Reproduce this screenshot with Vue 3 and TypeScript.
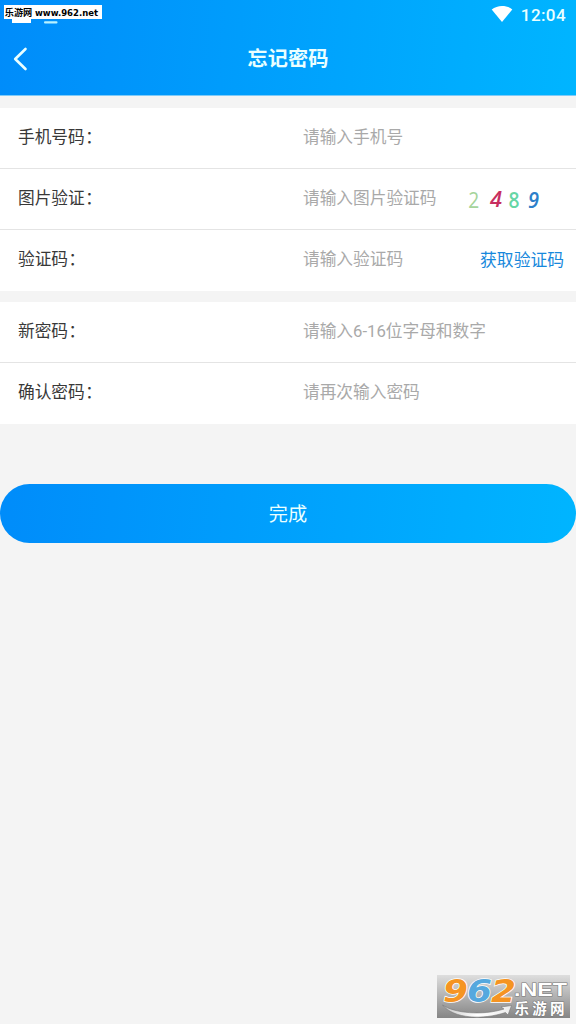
<script setup lang="ts">
import { reactive } from 'vue'

interface Field {
  key: string
  label: string
  hint: string
  extra?: 'captcha' | 'code'
}

const groups: Field[][] = [
  [
    { key: 'phone', label: '手机号码', hint: '请输入手机号' },
    { key: 'captcha', label: '图片验证', hint: '请输入图片验证码', extra: 'captcha' },
    { key: 'code', label: '验证码', hint: '请输入验证码', extra: 'code' },
  ],
  [
    { key: 'password', label: '新密码', hint: '请输入6-16位字母和数字' },
    { key: 'confirm', label: '确认密码', hint: '请再次输入密码' },
  ],
]

const form = reactive<Record<string, string>>({
  phone: '',
  captcha: '',
  code: '',
  password: '',
  confirm: '',
})
</script>

<template>
  <main class="screen" lang="zh-CN">
    <header class="header">
      <div class="status">
        <svg class="wifi" viewBox="0 0 22 18" width="22" height="18">
          <path d="M.7 4.4C6.5-.3 15.500-.3 21.300 4.400L11 17z" fill="#fff" />
        </svg>
        <span class="time">12:04</span>
      </div>
      <div class="nav">
        <svg class="back" viewBox="0 0 16 26" width="16" height="26">
          <path d="M13.500 3L3.200 13L13.500 23" fill="none" stroke="#eaffff" stroke-width="2.600" stroke-linecap="round" stroke-linejoin="round" />
        </svg>
        <h1 class="title">忘记密码</h1>
      </div>
      <svg class="site" viewBox="0 0 104 26" width="104" height="26">
        <rect x="12" y="18" width="19" height="5" fill="#fff" />
        <rect x="44" y="21.200" width="13.500" height="2.400" rx="1" fill="#b9f2ff" />
        <rect x="4" y="5" width="98" height="14" fill="#fff" />
        <text class="site-cn" x="4.800" y="16.300" textLength="27.500">乐游网</text>
        <text class="site-url" x="35" y="16" textLength="63" lengthAdjust="spacingAndGlyphs">www.962.net</text>
      </svg>
    </header>

    <section v-for="(group, i) in groups" :key="i" class="group">
      <div v-for="field in group" :key="field.key" class="row">
        <label class="label" :for="field.key">{{ field.label }}<span class="colon">：</span></label>
        <input :id="field.key" v-model="form[field.key]" class="input" :placeholder="field.hint" />
        <svg v-if="field.extra === 'captcha'" class="captcha" viewBox="0 0 84 30" width="84" height="30">
          <text x="8.300" y="23.500" fill="#a5d49b" font-size="22" textLength="11" lengthAdjust="spacingAndGlyphs">2</text>
          <text x="30" y="23" fill="#c72e60" font-size="22" font-weight="600" font-style="italic" textLength="12" lengthAdjust="spacingAndGlyphs">4</text>
          <text x="48.500" y="23.500" fill="#66d6a5" font-size="21" font-weight="600" textLength="11" lengthAdjust="spacingAndGlyphs">8</text>
          <text x="68" y="23.500" fill="#2d7fca" font-size="21" font-weight="600" font-style="italic" textLength="11" lengthAdjust="spacingAndGlyphs">9</text>
        </svg>
        <button v-if="field.extra === 'code'" class="get-code" type="button">获取验证码</button>
      </div>
    </section>

    <button class="submit" type="button">完成</button>

    <svg class="badge" viewBox="0 0 139 50" width="139" height="50">
      <defs>
        <linearGradient id="plate" x1="0" y1="0" x2="0" y2="1">
          <stop offset="0" stop-color="#dedede" />
          <stop offset="1" stop-color="#858585" />
        </linearGradient>
        <linearGradient id="swoosh" x1="0" y1="0" x2="1" y2="0">
          <stop offset="0" stop-color="#c5c5c5" />
          <stop offset=".5" stop-color="#fff" />
          <stop offset="1" stop-color="#ececec" />
        </linearGradient>
      </defs>
      <rect x="1" y="5" width="133" height="43" fill="url(#plate)" />
      <path d="M6.500 35C18 43 46 46 68 39L65 37L75.500 35.500L72 45L69.500 42.500C47 50 18 49 6.500 35z" fill="url(#swoosh)" stroke="#777" stroke-width=".6" />
      <g class="digits">
        <text x="7" y="32" fill="#f59422" textLength="25" lengthAdjust="spacingAndGlyphs">9</text>
        <text x="31" y="32" fill="#55a8de" textLength="25" lengthAdjust="spacingAndGlyphs">6</text>
        <text x="55" y="32" fill="#f59422" textLength="25" lengthAdjust="spacingAndGlyphs">2</text>
      </g>
      <text class="net" x="78" y="26" textLength="53" lengthAdjust="spacingAndGlyphs">.NET</text>
      <text class="net-cn" x="78.500" y="43.500" textLength="50">乐游网</text>
    </svg>
  </main>
</template>

<style>
body {
  background: #f4f4f4;
}
</style>

<style scoped>
.screen {
  position: relative;
  width: 576px;
  height: 1024px;
  overflow: hidden;
  background: #f4f4f4;
  color: #383838;
  font-family: Roboto, "Noto Sans CJK SC", sans-serif;
}
.header {
  position: relative;
  box-sizing: border-box;
  height: 96px;
  border-bottom: 1px solid #7fcbf8;
  background: linear-gradient(95deg, #008cfa, #00b5ff);
  color: #fff;
}
.status {
  display: flex;
  justify-content: flex-end;
  align-items: center;
  gap: 8px;
  height: 30px;
  padding-right: 10px;
}
.wifi {
  margin-top: -2px;
}
.time {
  font-size: 17px;
  font-weight: 500;
  letter-spacing: .4px;
  color: #eaffff;
}
.nav {
  display: grid;
  grid-template-columns: 40px 1fr 40px;
  align-items: center;
  height: 58px;
}
.back {
  margin-left: 12px;
}
.title {
  margin: 0;
  text-align: center;
  font-size: 20.200px;
  line-height: 28px;
  font-weight: 700;
  color: #eaffff;
}
.site {
  position: absolute;
  left: 0;
  top: 0;
}
.site-cn {
  font: 700 9.200px "Noto Sans CJK SC", sans-serif;
  fill: #000;
}
.site-url {
  font: 700 9.200px "DejaVu Sans", sans-serif;
  fill: #000;
}
.group {
  margin-top: 12px;
  background: #fff;
}
.group + .group {
  margin-top: 11px;
}
.row {
  display: flex;
  align-items: center;
  box-sizing: border-box;
  height: 61px;
  padding: 0 12px 0 18px;
  border-bottom: 1px solid #e4e4e4;
}
.row:last-child {
  border-bottom-color: #fff;
}
.label {
  width: 285px;
  flex: none;
  font-size: 16.700px;
  line-height: 24px;
  margin-top: -1px;
}
.colon {
  display: inline-block;
  margin-left: .5px;
}
.input {
  flex: 1;
  min-width: 0;
  height: 26px;
  margin: -2px 0 0;
  padding: 0;
  border: 0;
  outline: 0;
  background: transparent;
  color: #333;
  font: 16.700px Roboto, "Noto Sans CJK SC", sans-serif;
}
.input::placeholder {
  color: #a9a9a9;
  opacity: 1;
}
.captcha {
  flex: none;
  margin-right: 20px;
  font-family: "Open Sans", sans-serif;
}
.get-code {
  flex: none;
  padding: 0;
  border: 0;
  background: none;
  color: #1788dc;
  font: 16.800px/24px Roboto, "Noto Sans CJK SC", sans-serif;
}
.submit {
  display: block;
  width: 100%;
  height: 59.400px;
  margin-top: 60px;
  padding: 0 0 1px;
  border: 0;
  border-radius: 30px;
  background: linear-gradient(95deg, #008cfa, #00b5ff);
  color: #eaffff;
  font: 19.200px Roboto, "Noto Sans CJK SC", sans-serif;
}
.badge {
  position: absolute;
  left: 436px;
  top: 970px;
}
.digits {
  font: italic 700 32px "DejaVu Sans", sans-serif;
  stroke: #fff;
  stroke-width: 1.500px;
  paint-order: stroke;
}
.net {
  font: 700 18.500px "Liberation Sans", sans-serif;
  fill: #fff;
  stroke: #777;
  stroke-width: 1px;
  paint-order: stroke;
}
.net-cn {
  font: 700 14.500px "Noto Sans CJK SC", sans-serif;
  fill: #fff;
  stroke: #777;
  stroke-width: 1px;
  paint-order: stroke;
}
</style>
